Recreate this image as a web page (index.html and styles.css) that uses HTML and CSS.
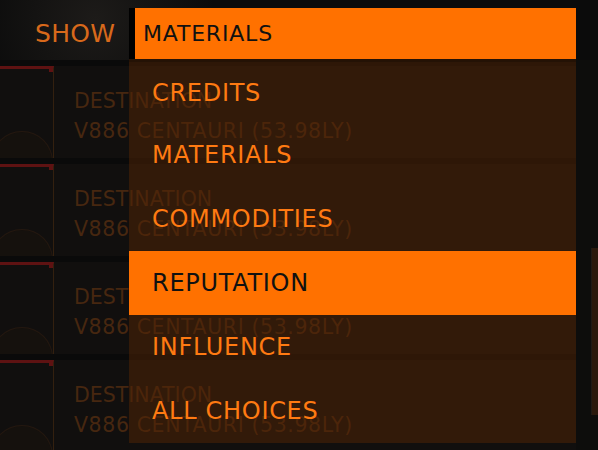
FILE: index.html
```html
<!DOCTYPE html>
<html lang="en">
<head>
<meta charset="UTF-8">
<title>Show filter</title>
<meta name="viewport" content="width=device-width,initial-scale=1">
<link rel="stylesheet" href="styles.css">
</head>
<body>
<div class="screen">

  <header class="topbar">
    <span class="show">SHOW</span>
  </header>

  <div class="content">
    <ul class="missions">
      <li class="mission">
        <div class="thumb"><span class="planet"></span></div>
        <div class="info">
          <div class="label">DESTINATION</div>
          <div class="value">V886 CENTAURI (53.98LY)</div>
        </div>
      </li>
      <li class="mission">
        <div class="thumb"><span class="planet"></span></div>
        <div class="info">
          <div class="label">DESTINATION</div>
          <div class="value">V886 CENTAURI (53.98LY)</div>
        </div>
      </li>
      <li class="mission">
        <div class="thumb"><span class="planet"></span></div>
        <div class="info">
          <div class="label">DESTINATION</div>
          <div class="value">V886 CENTAURI (53.98LY)</div>
        </div>
      </li>
      <li class="mission">
        <div class="thumb"><span class="planet"></span></div>
        <div class="info">
          <div class="label">DESTINATION</div>
          <div class="value">V886 CENTAURI (53.98LY)</div>
        </div>
      </li>
    </ul>
    <div class="scroll"><div class="scroll-thumb"></div></div>
  </div>

  <!-- open dropdown -->
  <div class="dropdown">
    <div class="dd-current">MATERIALS</div>
    <ul class="dd-list">
      <li class="dd-item">CREDITS</li>
      <li class="dd-item">MATERIALS</li>
      <li class="dd-item">COMMODITIES</li>
      <li class="dd-item active">REPUTATION</li>
      <li class="dd-item">INFLUENCE</li>
      <li class="dd-item">ALL CHOICES</li>
    </ul>
  </div>

</div>
</body>
</html>
```

FILE: styles.css
```css
:root{
  --orange:#ff7100;
  --dim:#472710;
  --bg:#110f0e;
}
*{box-sizing:border-box;margin:0;padding:0}
body{background:#0c0c0c;font-family:"DejaVu Sans",sans-serif;overflow:hidden}
ul{list-style:none}

.screen{position:relative;width:598px;height:450px;overflow:hidden;
  background:radial-gradient(circle at 95px 20px,#1d1b19 0,#0b0b0b 120px)}

/* top bar */
.topbar{height:60px;display:flex;align-items:center;padding-left:35px}
.show{color:#d8691b;font-size:25px;line-height:30px;margin-top:8px;letter-spacing:.3px}

/* mission list behind */
.content{display:flex;height:390px}
.missions{width:576px;background:#0a0a0a;padding-top:6px}
.mission{display:flex;height:92px;margin-bottom:6px;background:var(--bg)}
.thumb{position:relative;width:54px;border-top:3px solid #5e1212;border-right:1px solid #33200f;overflow:hidden}
/* small tab at end of the red bar */
.thumb::before{content:"";position:absolute;right:0;top:0;width:4px;height:3px;background:#5e1212}
.planet{display:block;width:62px;height:62px;margin:62px 0 0 -9px;border-radius:50%;
  border:1px solid rgba(80,45,20,.25);background:rgba(34,22,14,.3)}
.info{padding:20px 0 0 20px;color:var(--dim);font-size:20.5px;line-height:30px;white-space:nowrap}
.value{letter-spacing:.6px}
.scroll{width:22px;background:#0d0d0c;display:flex;justify-content:flex-end;padding-top:5px}
.scroll-thumb{width:7px;height:167px;margin-top:183px;background:#2a190d;border-left:1px solid #1e1a16}

/* dropdown */
.dropdown{position:absolute;left:129px;top:8px;width:447px}
.dd-current{height:51px;background:var(--orange);border-left:6px solid #000;padding-left:8px;
  display:flex;align-items:center;font-size:22px;color:#111;letter-spacing:.8px}
.dd-list{background:rgba(80,36,6,.52);border-top:3px solid rgba(30,15,5,.6)}
.dd-item{height:64px;display:flex;align-items:center;padding-left:23px;font-size:24px;color:#ff7a12;letter-spacing:.7px}
.dd-item:first-child{height:61px}
.dd-item.active{background:var(--orange);color:#111}
```
